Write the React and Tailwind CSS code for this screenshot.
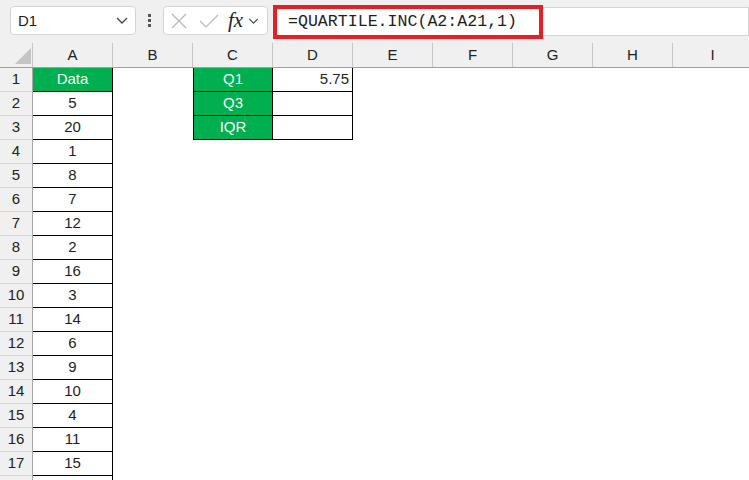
import React from "react";

const colA = ["Data", "5", "20", "1", "8", "7", "12", "2", "16", "3", "14", "6", "9", "10", "4", "11", "15", ""];
const cols = ["A", "B", "C", "D", "E", "F", "G", "H", "I"];
const cLabels = ["Q1", "Q3", "IQR"];

function Chevron({ className, w = 12, h = 7 }) {
  return (
    <svg width={w} height={h} viewBox="0 0 12 7" className={className}>
      <polyline points="1,1 6,6 11,1" fill="none" stroke="#444" strokeWidth="1.3" />
    </svg>
  );
}

export default function App() {
  const rows = colA.map((v, i) => i);
  return (
    <div
      className="w-[749px] h-[480px] overflow-hidden bg-white text-[#1e1e1e]"
      style={{ fontFamily: '"Liberation Sans", Arial, sans-serif' }}
    >
      {/* Top bar */}
      <div className="h-[43px] bg-[#f0f0f0] flex items-start pt-[6px]">
        <div className="ml-[10px] w-[126px] h-[29px] rounded-[4px] border border-[#d4d4d4] bg-white flex items-center justify-between pl-[7px] pr-[7px]">
          <span className="text-[15px] leading-none">D1</span>
          <Chevron />
        </div>
        <div className="w-[27px] h-[29px] flex flex-col items-center justify-center gap-[2px]">
          <div className="w-[3px] h-[3px] bg-[#555]" />
          <div className="w-[3px] h-[3px] bg-[#555]" />
          <div className="w-[3px] h-[3px] bg-[#555]" />
        </div>
        <div className="w-[105px] h-[29px] rounded-[4px] border border-[#d4d4d4] bg-white flex items-center pl-[7px]">
          <svg width="16" height="16" viewBox="0 0 16 16">
            <line x1="1" y1="1" x2="15" y2="15" stroke="#b8b8b8" strokeWidth="1.2" />
            <line x1="15" y1="1" x2="1" y2="15" stroke="#b8b8b8" strokeWidth="1.2" />
          </svg>
          <svg width="20" height="16" viewBox="0 0 20 16" className="ml-[12px]">
            <polyline points="1,8 7,14 19,2" fill="none" stroke="#b8b8b8" strokeWidth="1.2" />
          </svg>
          <span
            className="ml-[9px] text-[21px] italic leading-none text-[#222]"
            style={{ fontFamily: '"Liberation Serif", "Times New Roman", serif' }}
          >
            fx
          </span>
          <Chevron className="ml-[5px]" w={11} h={6} />
        </div>
        <div className="ml-[5px] flex-1 h-[29px] mt-[1px] bg-white border border-[#d4d4d4] rounded-l-[4px] relative">
          <div className="absolute left-[-1px] top-[-3px] w-[270px] h-[34px] border-[4px] border-[#e41f26] flex items-center pl-[11px]">
            <span
              className="text-[16.6px] leading-none text-[#1e1e1e]"
              style={{ fontFamily: '"Liberation Mono", "Courier New", monospace' }}
            >
              =QUARTILE.INC(A2:A21,1)
            </span>
          </div>
        </div>
      </div>

      {/* Column headers */}
      <div className="flex h-[25px] bg-[#f0f0f0] border-b border-[#a0a0a0]">
        <div className="w-[33px] shrink-0 border-r border-[#c6c6c6] relative">
          <svg width="33" height="24" viewBox="0 0 33 24" className="absolute left-0 top-0">
            <polygon points="15,21 31,21 31,5" fill="#c4c4c4" />
          </svg>
        </div>
        {cols.map((c) => (
          <div
            key={c}
            className="w-[80px] shrink-0 border-r border-[#c6c6c6] flex items-center justify-center text-[15px] text-[#222]"
          >
            {c}
          </div>
        ))}
      </div>

      {/* Rows */}
      {rows.map((i) => {
        const hasCD = i < 3;
        return (
          <div key={i} className="flex h-[24px] text-[15px]">
            <div className="w-[33px] shrink-0 bg-[#f0f0f0] border-r border-b border-r-[#a6a6a6] border-b-[#d6d6d6] flex items-center justify-center text-[#222]">
              {i < 17 ? i + 1 : ""}
            </div>
            <div
              className={
                "w-[80px] shrink-0 border-r border-b border-black flex items-center justify-center " +
                (i === 0 ? "bg-[#00b050] text-white" : "text-[#1e1e1e]")
              }
            >
              {colA[i]}
            </div>
            <div className="w-[80px] shrink-0" />
            {hasCD ? (
              <>
                <div className="w-[80px] shrink-0 bg-[#00b050] text-white border-l border-r border-b border-black flex items-center justify-center">
                  {cLabels[i]}
                </div>
                <div className="w-[80px] shrink-0 border-r border-b border-black flex items-center justify-end pr-[3px]">
                  {i === 0 ? "5.75" : ""}
                </div>
              </>
            ) : (
              <>
                <div className="w-[80px] shrink-0" />
                <div className="w-[80px] shrink-0" />
              </>
            )}
          </div>
        );
      })}
    </div>
  );
}
